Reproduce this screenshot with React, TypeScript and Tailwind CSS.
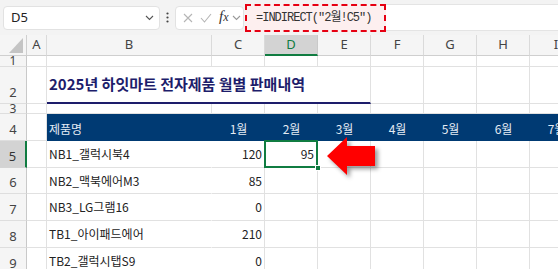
import { ReactNode } from "react";

const cols = ["A", "B", "C", "D", "E", "F", "G", "H", "I"];
const months = ["1월", "2월", "3월", "4월", "5월", "6월", "7월"];
const products = [
    { name: "NB1_갤럭시북4", qty: 120 },
    { name: "NB2_맥북에어M3", qty: 85 },
    { name: "NB3_LG그램16", qty: 0 },
    { name: "TB1_아이패드에어", qty: 210 },
    { name: "TB2_갤럭시탭S9", qty: 0 },
];

const Chevron = ({ color = "#555" }: { color?: string }) => (
    <svg width="9" height="6" viewBox="0 0 9 6">
        <path d="M1 1l3.5 3.5L8 1" fill="none" stroke={color} strokeWidth="1.1" />
    </svg>
);

const TopBar = () => (
    <div className="h-[35px] bg-[#f3f3f3] flex items-center pl-[3px]">
        <div className="w-[157px] h-[24px] bg-white border border-[#e2e2e2] rounded-[4px] flex items-center justify-between pl-[7px] pr-[5px] text-[13px] text-[#222]">
            <span>D5</span>
            <Chevron />
        </div>
        <div className="w-[15px] flex justify-center">
            <svg width="3" height="11" viewBox="0 0 3 11">
                <circle cx="1.5" cy="1.5" r="1.1" fill="#444" />
                <circle cx="1.5" cy="5.5" r="1.1" fill="#444" />
                <circle cx="1.5" cy="9.5" r="1.1" fill="#444" />
            </svg>
        </div>
        <div className="w-[69px] h-[24px] bg-white border border-[#e2e2e2] rounded-[4px] flex items-center pl-[7px] gap-[7px]">
            <svg width="10" height="10" viewBox="0 0 10 10">
                <path d="M1 1l8 8M9 1l-8 8" stroke="#b5b5b5" strokeWidth="1.1" />
            </svg>
            <svg width="12" height="10" viewBox="0 0 12 10">
                <path d="M1 5l3.5 4L11 1" fill="none" stroke="#b5b5b5" strokeWidth="1.1" />
            </svg>
            <span className="font-['Liberation_Serif',serif] italic text-[15px] leading-none text-[#333] -mt-[2px]">
                f<span className="text-[12px]">x</span>
            </span>
            <span className="-ml-[4px]"><Chevron color="#999" /></span>
        </div>
        <div className="ml-[1px] flex-1 h-[27px] bg-white border-y border-[#e4e4e4] flex">
            <div className="w-[141px] h-[28px] -mt-[1px] border-2 border-dashed border-[#e60012] bg-[#fdefef] flex items-center pl-[9px] font-['Liberation_Mono','Noto_Sans_CJK_KR',monospace] text-[12px] tracking-[-1px] text-[#333] whitespace-nowrap">
                =INDIRECT("2월!C5")
            </div>
        </div>
    </div>
);

const RowHead = ({ label, active, short }: { label: string; active?: boolean; short?: boolean }) => {
    if (short) {
        return (
            <div className="bg-[#f5f5f5] border-r border-r-[#c9c9c9] border-b border-b-[#dedede] flex items-start justify-center overflow-hidden text-[12px] leading-[10px] text-[#444] font-['Noto_Sans',sans-serif]">
                {label}
            </div>
        );
    }
    return (
        <div
            className={
                active
                    ? "bg-[#d3d3d3] border-r-2 border-r-[#107c41] border-b border-b-[#d4d4d4] flex items-end justify-center pb-[3px] overflow-hidden text-[13px] leading-[16px] text-[#333] font-['Noto_Sans',sans-serif]"
                    : "bg-[#f5f5f5] border-r border-r-[#c9c9c9] border-b border-b-[#dedede] flex items-end justify-center pb-[3px] overflow-hidden text-[13px] leading-[16px] text-[#444] font-['Noto_Sans',sans-serif]"
            }
        >
            {label}
        </div>
    );
};

const Cell = ({ className = "", children }: { className?: string; children?: ReactNode }) => (
    <div className={"border-r border-b border-[#e1e1e1] whitespace-nowrap flex items-center " + className}>
        {children}
    </div>
);

const Navy = ({ children, left }: { children?: ReactNode; left?: boolean }) => (
    <div
        className={
            left
                ? "bg-[#003a73] flex items-center pl-[2px] pt-[2px] text-[12px] text-[#e4ebf3]"
                : "bg-[#003a73] flex items-center justify-center pt-[2px] text-[12px] text-[#e4ebf3] whitespace-nowrap"
        }
    >
        {children}
    </div>
);

const Sheet = () => (
    <div className="grid grid-cols-[27px_20px_165px_53px_53px_53px_53px_53px_53px_53px] grid-rows-[21px_11px_37px_10px_27px_27px_26px_27px_27px_27px] font-['Noto_Sans_CJK_KR',sans-serif] text-[12px] text-[#222]">
        {/* column headers */}
        <div className="bg-[#f5f5f5] border-r border-b border-[#cfcfcf] flex items-end justify-end pr-[3px] pb-[2px]">
            <svg width="14" height="15" viewBox="0 0 14 15">
                <path d="M14 0V15H0Z" fill="#c4c4c4" />
            </svg>
        </div>
        {cols.map((c) =>
            c === "D" ? (
                <div key={c} className="bg-[#d3d3d3] border-r border-r-[#c9c9c9] border-b-2 border-b-[#107c41] flex items-center justify-center text-[13px] text-[#107c41] font-['Noto_Sans',sans-serif]">
                    {c}
                </div>
            ) : (
                <div key={c} className="bg-[#f5f5f5] border-r border-r-[#dadada] border-b border-b-[#cfcfcf] flex items-center justify-center text-[13px] text-[#444] font-['Noto_Sans',sans-serif]">
                    {c}
                </div>
            )
        )}

        {/* row 1 */}
        <RowHead label="1" short />
        {cols.map((c) => <Cell key={c} />)}

        {/* row 2: title */}
        <RowHead label="2" />
        <Cell />
        <div className="col-span-4 border-r border-r-[#e1e1e1] border-b-2 border-b-[#1d1d6b] flex items-center pl-[2px] text-[15px] font-bold text-[#1d1d6b] whitespace-nowrap">
            2025년 하잇마트 전자제품 월별 판매내역
        </div>
        <Cell />
        <Cell />
        <Cell />
        <Cell />

        {/* row 3 */}
        <RowHead label="3" short />
        {cols.map((c) => <Cell key={c} />)}

        {/* row 4: table header */}
        <RowHead label="4" />
        <Cell />
        <Navy left>제품명</Navy>
        {months.map((m) => <Navy key={m}>{m}</Navy>)}

        {/* data rows */}
        {products.map((p, i) => (
            <div key={p.name} className="contents">
                <RowHead label={String(i + 5)} active={i === 0} />
                <Cell />
                <Cell className="border-r-white pl-[2px]">{p.name}</Cell>
                <Cell className="justify-end pr-[2px]">{p.qty}</Cell>
                {i === 0 ? (
                    <div className="relative border-r border-b border-[#e1e1e1] flex items-center justify-end pr-[3px]">
                        95
                        <div className="absolute -top-[1px] -left-[1px] -right-[1px] -bottom-[1px] border-2 border-[#107c41]" />
                        <div className="absolute -right-[4px] -bottom-[4px] w-[6px] h-[6px] bg-[#107c41] border border-white" />
                    </div>
                ) : (
                    <Cell />
                )}
                <Cell />
                <Cell />
                <Cell />
                <Cell />
                <Cell />
            </div>
        ))}
    </div>
);

const App = () => {
    return (
        <div className="relative w-[558px] h-[269px] overflow-hidden bg-white">
            <TopBar />
            <Sheet />
            {/* red arrow pointing at D5 */}
            <svg
                className="absolute left-[327px] top-[137px] drop-shadow-[3px_3px_2px_rgba(0,0,0,0.4)]"
                width="49"
                height="39"
                viewBox="0 0 49 39"
            >
                <path d="M0 19L20 0V9H48V29H20V38Z" fill="#ff0000" />
            </svg>
        </div>
    );
};

export default App;
